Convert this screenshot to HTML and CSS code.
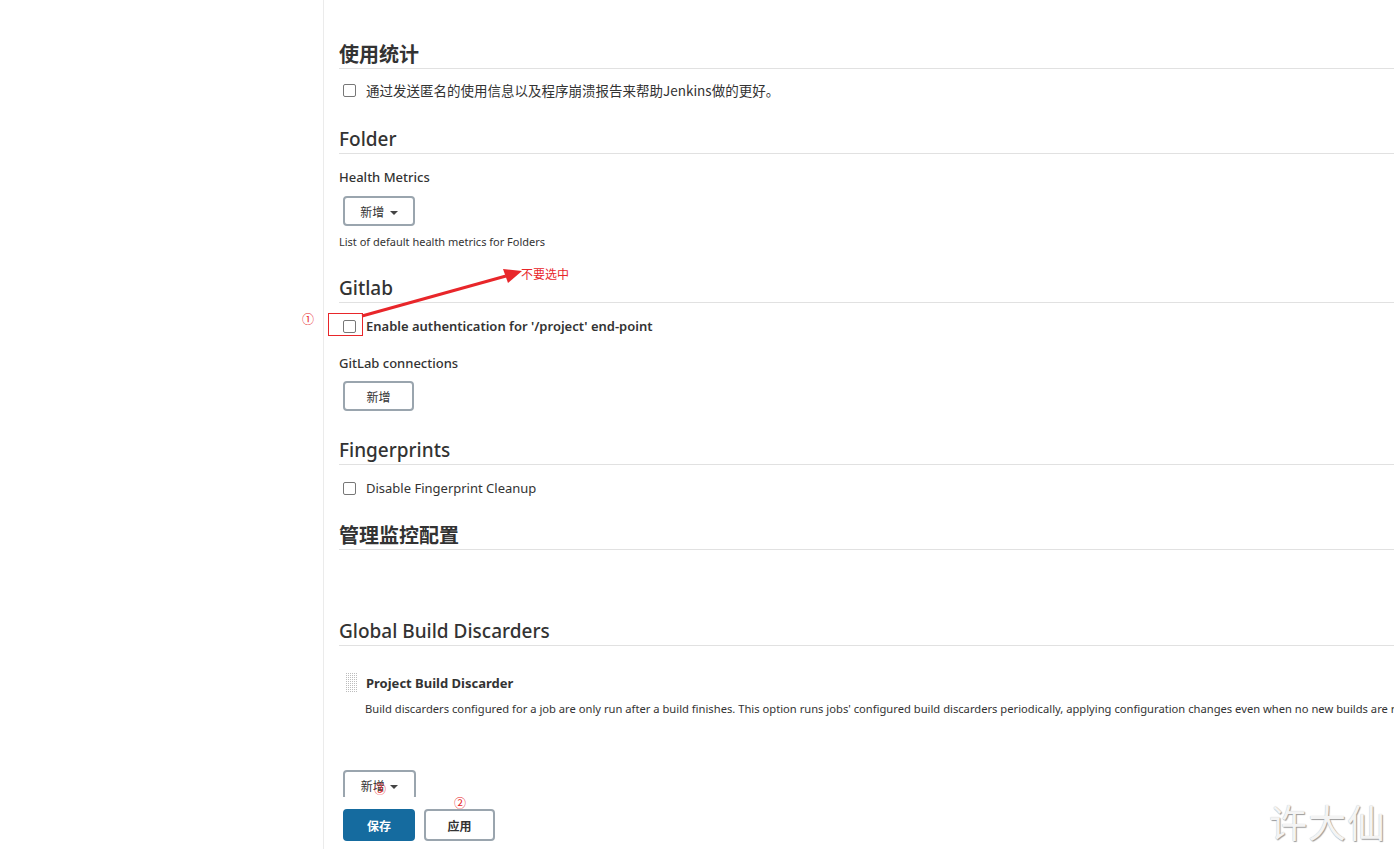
FILE: index.html
```html
<!DOCTYPE html>
<html lang="zh-CN">
<head>
    <meta charset="UTF-8">
    <meta name="viewport" content="width=device-width, initial-scale=1.0">
    <title>Configure System</title>
    <link rel="stylesheet" href="styles.css">
</head>
<body>
    <div class="page">
        <div class="side"></div>
        <div class="main">
            <div class="content">
                <h2 class="cjk-title">使用统计</h2>
                <label class="check-row first">
                    <span class="box"></span>
                    <span class="cjk">通过发送匿名的使用信息以及程序崩溃报告来帮助Jenkins做的更好。</span>
                </label>

                <h2 class="section-title">Folder</h2>
                <div class="field-label hm">Health Metrics</div>
                <button class="add-btn drop hm-btn">新增 <span class="caret"></span></button>
                <div class="help">List of default health metrics for Folders</div>

                <h2 class="section-title gitlab">Gitlab</h2>
                <label class="check-row strong">
                    <span class="box"></span>
                    <span>Enable authentication for '/project' end-point</span>
                </label>
                <div class="field-label gl">GitLab connections</div>
                <button class="add-btn gl-btn">新增</button>

                <h2 class="section-title fp">Fingerprints</h2>
                <label class="check-row">
                    <span class="box"></span>
                    <span>Disable Fingerprint Cleanup</span>
                </label>

                <h2 class="cjk-title monitor">管理监控配置</h2>

                <h2 class="section-title gbd">Global Build Discarders</h2>
                <div class="discarder">
                    <svg class="handle" width="12" height="20" viewBox="0 0 12 20">
                        <defs>
                            <pattern id="dots" width="2" height="2" patternUnits="userSpaceOnUse">
                                <rect width="1" height="1" fill="#bdbdbd"/>
                            </pattern>
                        </defs>
                        <rect width="12" height="20" fill="url(#dots)"/>
                    </svg>
                    <span class="discarder-name">Project Build Discarder</span>
                </div>
                <div class="discarder-help">Build discarders configured for a job are only run after a build finishes. This option runs jobs' configured build discarders periodically, applying configuration changes even when no new builds are run.</div>
                <button class="add-btn drop last-btn">新增 <span class="caret"></span></button>
            </div>
            <div class="bottom-bar">
                <button class="save-btn">保存</button>
                <button class="apply-btn">应用</button>
            </div>
        </div>
    </div>

    <!-- annotations drawn over the screenshot -->
    <svg class="arrow" width="1394" height="849" viewBox="0 0 1394 849">
        <rect x="328.5" y="313.5" width="34" height="22" fill="none" stroke="#e8262a" stroke-width="1"/>
        <line x1="362" y1="316" x2="506" y2="276" stroke="#e8262a" stroke-width="3"/>
        <polygon points="522,271 503,269 508,283" fill="#e8262a"/>
    </svg>
    <span class="note note-text">不要选中</span>
    <span class="note num1">①</span>
    <span class="note num2">②</span>
    <span class="note num3">③</span>
    <span class="watermark">许大仙</span>
</body>
</html>
```

FILE: styles.css
```css
body {
    margin: 0;
    font-family: "Noto Sans", "Noto Sans CJK SC", sans-serif;
    color: #333;
    background: #fff;
    overflow: hidden;
}
.page {
    display: flex;
    height: 849px;
}
.side {
    width: 323px;
    flex-shrink: 0;
    border-right: 1px solid #ebebeb;
}
.main {
    flex: 1;
    display: flex;
    flex-direction: column;
    min-width: 0;
}
.content {
    flex: 1;
    overflow: hidden;
    padding: 40px 0 0 15px;
    display: flex;
    flex-direction: column;
    align-items: flex-start;
}
.content > * {
    flex-shrink: 0;
}
h2 {
    margin: 0;
    align-self: stretch;
    height: 28px;
    line-height: 28px;
    border-bottom: 1px solid #e1e1e1;
    color: #333;
}
.section-title {
    font-size: 19px;
    font-weight: 500;
    margin-top: 25px;
}
.cjk-title {
    font-family: "Noto Sans CJK SC", sans-serif;
    font-size: 20px;
    font-weight: 700;
}
.section-title.gitlab {
    margin-top: 24px;
}
.section-title.fp {
    margin-top: 25px;
}
.cjk-title.monitor {
    margin-top: 23px;
}
.section-title.gbd {
    margin-top: 67px;
}
.check-row {
    display: flex;
    align-items: center;
    height: 20px;
    font-size: 13px;
    margin-top: 13px;
    margin-left: 4px;
}
.check-row.first {
    margin-top: 11px;
}
.check-row.strong {
    font-weight: 600;
}
.box {
    width: 11px;
    height: 11px;
    border: 1px solid #777;
    border-radius: 2px;
    margin-right: 10px;
}
.cjk {
    font-family: "Noto Sans CJK SC", sans-serif;
    font-size: 13.5px;
}
.field-label {
    font-size: 13px;
    font-weight: 500;
    line-height: 20px;
}
.field-label.hm {
    margin-top: 13px;
}
.field-label.gl {
    margin-top: 17px;
}
.add-btn {
    height: 30px;
    width: 72px;
    margin-left: 4px;
    border: 2px solid #9aa5ae;
    border-radius: 4px;
    background: #fff;
    font-family: "Noto Sans CJK SC", sans-serif;
    font-size: 12px;
    color: #333;
    padding: 0;
}
.hm-btn {
    margin-top: 9px;
}
.gl-btn {
    margin-top: 8px;
    width: 71px;
}
.last-btn {
    margin-top: 53px;
    width: 73px;
}
.caret {
    display: inline-block;
    width: 0;
    height: 0;
    border-left: 4px solid transparent;
    border-right: 4px solid transparent;
    border-top: 4px solid #444;
    vertical-align: middle;
    margin-left: 3px;
}
.help {
    font-size: 11px;
    line-height: 16px;
    margin-top: 8px;
}
.discarder {
    display: flex;
    align-items: center;
    height: 20px;
    margin-top: 27px;
    margin-left: 7px;
}
.handle {
    margin-right: 8px;
}
.discarder-name {
    font-size: 13px;
    font-weight: 700;
}
.discarder-help {
    font-size: 11.2px;
    line-height: 16px;
    margin-top: 8px;
    margin-left: 26px;
    white-space: nowrap;
}
.bottom-bar {
    height: 52px;
    flex-shrink: 0;
    background: #fff;
    padding: 12px 0 0 19px;
    box-sizing: border-box;
    display: flex;
    gap: 9px;
}
.save-btn, .apply-btn {
    height: 32px;
    width: 72px;
    border-radius: 4px;
    font-family: "Noto Sans CJK SC", sans-serif;
    font-size: 12px;
    font-weight: 700;
    padding: 0;
}
.save-btn {
    background: #156b9f;
    border: 2px solid #156b9f;
    color: #fff;
}
.apply-btn {
    width: 71px;
    background: #fff;
    border: 2px solid #9aa5ae;
    color: #333;
}
.arrow {
    position: absolute;
    left: 0;
    top: 0;
    pointer-events: none;
}
.note {
    position: absolute;
    color: #e8262a;
    font-family: "Noto Sans CJK SC", sans-serif;
    font-size: 12px;
    line-height: 14px;
}
.note-text {
    left: 521px;
    top: 267px;
}
.num1 {
    left: 302px;
    top: 312px;
}
.num2 {
    left: 454px;
    top: 796px;
}
.num3 {
    left: 374px;
    top: 782px;
}
.watermark {
    position: absolute;
    left: 1269px;
    top: 797px;
    font-family: "Noto Sans CJK SC", sans-serif;
    font-size: 38px;
    line-height: 48px;
    color: #f4f4f4;
    text-shadow: 1px 1px 1px #9a9a9a, 0 0 1px #bbb;
    letter-spacing: 1px;
}
```
